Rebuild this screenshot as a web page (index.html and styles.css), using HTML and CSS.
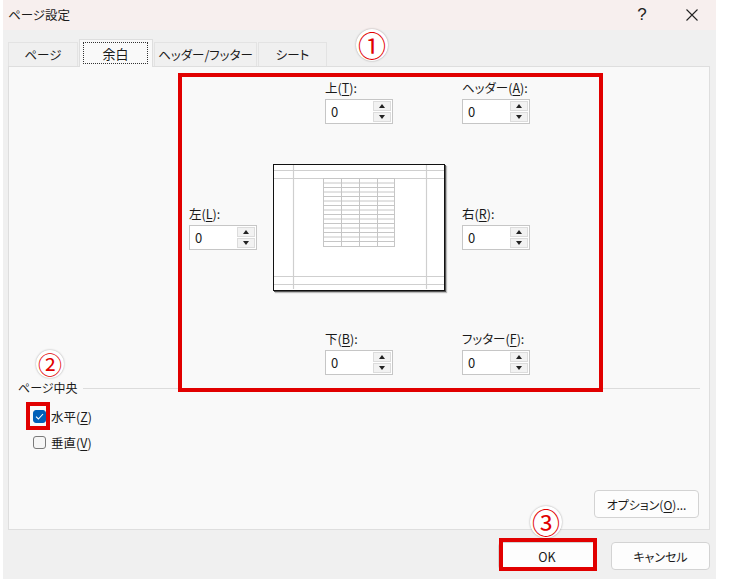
FILE: index.html
```html
<!DOCTYPE html>
<html lang="ja">
<head>
<meta charset="utf-8">
<title>ページ設定</title>
<link rel="stylesheet" href="styles.css">
</head>
<body>
<div class="dialog">
  <div class="titlebar">
    <span class="title">ページ設定</span>
    <div class="tb-btns">
      <span class="help">?</span>
      <span class="close"><svg width="12" height="12" viewBox="0 0 12 12"><path d="M0.5 0.5 L11.5 11.5 M11.5 0.5 L0.5 11.5" stroke="#222" stroke-width="1.1" fill="none"/></svg></span>
    </div>
  </div>
  <div class="body">
    <div class="tabs">
      <div class="tab t1">ページ</div>
      <div class="tab active"><span class="focus">余白</span></div>
      <div class="tab t3">ヘッダー/フッター</div>
      <div class="tab t4">シート</div>
    </div>
    <div class="panel">
      <div class="margins">
        <div class="row row-top">
          <div class="spin-group">
            <div class="lbl">上(<u>T</u>):</div>
            <div class="spin"><span class="val">0</span><span class="arrows"><span class="up"></span><span class="down"></span></span></div>
          </div>
          <div class="spin-group">
            <div class="lbl">ヘッダー(<u>A</u>):</div>
            <div class="spin"><span class="val">0</span><span class="arrows"><span class="up"></span><span class="down"></span></span></div>
          </div>
        </div>
        <div class="row row-mid">
          <div class="spin-group side">
            <div class="lbl">左(<u>L</u>):</div>
            <div class="spin"><span class="val">0</span><span class="arrows"><span class="up"></span><span class="down"></span></span></div>
          </div>
          <div class="preview">
            <svg width="170" height="124" viewBox="0 0 170 124">
              <g stroke="#cfcfcf" stroke-width="1.2" fill="none">
                <line x1="0" y1="5.5" x2="170" y2="5.5"/>
                <line x1="0" y1="13.5" x2="170" y2="13.5"/>
                <line x1="0" y1="111.5" x2="170" y2="111.5"/>
                <line x1="0" y1="119.5" x2="170" y2="119.5"/>
                <line x1="19.5" y1="0" x2="19.5" y2="124"/>
                <line x1="152.5" y1="0" x2="152.5" y2="124"/>
              </g>
              <g stroke="#c6c6c6" stroke-width="1" fill="none">
                <rect x="49.5" y="13.5" width="71" height="68"/>
                <line x1="67.5" y1="13.5" x2="67.5" y2="81.5"/>
                <line x1="85.5" y1="13.5" x2="85.5" y2="81.5"/>
                <line x1="103.5" y1="13.5" x2="103.5" y2="81.5"/>
                <line x1="49.5" y1="18" x2="120.5" y2="18"/>
                <line x1="49.5" y1="22.5" x2="120.5" y2="22.5"/>
                <line x1="49.5" y1="27" x2="120.5" y2="27"/>
                <line x1="49.5" y1="31.5" x2="120.5" y2="31.5"/>
                <line x1="49.5" y1="36" x2="120.5" y2="36"/>
                <line x1="49.5" y1="40.5" x2="120.5" y2="40.5"/>
                <line x1="49.5" y1="45" x2="120.5" y2="45"/>
                <line x1="49.5" y1="49.5" x2="120.5" y2="49.5"/>
                <line x1="49.5" y1="54" x2="120.5" y2="54"/>
                <line x1="49.5" y1="58.5" x2="120.5" y2="58.5"/>
                <line x1="49.5" y1="63" x2="120.5" y2="63"/>
                <line x1="49.5" y1="67.5" x2="120.5" y2="67.5"/>
                <line x1="49.5" y1="72" x2="120.5" y2="72"/>
                <line x1="49.5" y1="76.5" x2="120.5" y2="76.5"/>
              </g>
            </svg>
          </div>
          <div class="spin-group">
            <div class="lbl">右(<u>R</u>):</div>
            <div class="spin"><span class="val">0</span><span class="arrows"><span class="up"></span><span class="down"></span></span></div>
          </div>
        </div>
        <div class="row row-bottom">
          <div class="spin-group">
            <div class="lbl">下(<u>B</u>):</div>
            <div class="spin"><span class="val">0</span><span class="arrows"><span class="up"></span><span class="down"></span></span></div>
          </div>
          <div class="spin-group">
            <div class="lbl">フッター(<u>F</u>):</div>
            <div class="spin"><span class="val">0</span><span class="arrows"><span class="up"></span><span class="down"></span></span></div>
          </div>
        </div>
      </div>
      <div class="center-group">
        <div class="legend"><span>ページ中央</span><span class="rule"></span></div>
        <div class="check first"><span class="box checked"><svg width="9" height="7" viewBox="0 0 9 7"><path d="M1 3.6 L3.4 6 L8 1" stroke="#fff" stroke-width="1.1" fill="none"/></svg></span><span>水平(<u>Z</u>)</span></div>
        <div class="check"><span class="box"></span><span>垂直(<u>V</u>)</span></div>
      </div>
      <div class="options-row"><span class="btn opt">オプション(<u>O</u>)...</span></div>
    </div>
    <div class="footer">
      <span class="btn ok">OK</span>
      <span class="btn cancel">キャンセル</span>
    </div>
  </div>
  <div class="mark mark-margins"></div>
  <div class="mark mark-check"></div>
  <div class="mark mark-ok"></div>
  <span class="callout c1">①</span>
  <span class="callout c2">②</span>
  <span class="callout c3">③</span>
</div>
</body>
</html>
```

FILE: styles.css
```css
* { box-sizing: border-box; }
html, body { margin: 0; padding: 0; background: #ffffff; }
body {
  font-family: "Noto Sans CJK JP", "Noto Sans", sans-serif;
  font-size: 12px;
  color: #1a1a1a;
  font-feature-settings: "palt";
}
u { text-decoration: underline; text-underline-offset: 2px; text-decoration-thickness: 1px; }

.dialog {
  position: relative;
  margin-left: 3px;
  width: 713px;
  height: 579px;
  background: #f0f0f0;
  display: flex;
  flex-direction: column;
}
.titlebar {
  height: 30px;
  flex: none;
  background: #f7efee;
  display: flex;
  align-items: center;
  justify-content: space-between;
  padding-left: 5px;
}
.title { font-size: 12.5px; line-height: 16px; }
.tb-btns { display: flex; align-items: center; height: 30px; }
.help { width: 20px; text-align: center; font-size: 17px; line-height: 20px; margin-right: 34px; font-family: "Liberation Sans", sans-serif; color: #222; }
.close { width: 12px; height: 12px; display: flex; margin-right: 18px; }

.body {
  flex: 1;
  display: flex;
  flex-direction: column;
  padding: 9px 6px 0 5px;
}
.tabs {
  display: flex;
  align-items: flex-end;
  height: 27px;
  flex: none;
  position: relative;
  z-index: 2;
}
.tab {
  height: 24px;
  border: 1px solid #e3e3e3;
  border-bottom: none;
  background: #f0f0f0;
  display: flex;
  align-items: center;
  justify-content: center;
  font-size: 12.5px;
  margin-right: 1px;
}
.t1 { width: 70px; }
.t3 { width: 103px; }
.t4 { width: 69px; }
.tab.active {
  width: 74px;
  height: 28px;
  margin-bottom: -1px;
  background: #f9f9f9;
  border-color: #dedede;
  padding: 2px 4px 3px 3px;
}
.focus {
  width: 100%;
  height: 100%;
  border: 1px dotted #333;
  display: flex;
  align-items: center;
  justify-content: center;
  font-size: 13px;
}

.panel {
  height: 464px;
  flex: none;
  background: #f9f9f9;
  border: 1px solid #dedede;
  display: flex;
  flex-direction: column;
  padding: 13px 0 11px 0;
}
.row { display: flex; }
.row-top, .row-bottom { padding-left: 316px; }
.row-top .spin-group:first-child, .row-bottom .spin-group:first-child { width: 137px; }
.row-mid { padding-left: 180px; align-items: center; margin-top: 40px; }
.row-bottom { margin-top: 40px; }
.spin-group.side { width: 84px; }
.lbl { line-height: 16px; height: 16px; margin-bottom: 3px; font-size: 12.5px; white-space: nowrap; }
.spin {
  width: 68px;
  height: 25px;
  background: #ffffff;
  border: 1px solid #c6c6c6;
  display: flex;
  align-items: stretch;
}
.val { flex: 1; padding-left: 5px; font-size: 13px; line-height: 23px; }
.arrows {
  width: 18px;
  margin: 1px 1px 1px 0;
  display: flex;
  flex-direction: column;
  gap: 1px;
}
.arrows span {
  flex: 1;
  background: #f2f2f2;
  border: 1px solid #dcdcdc;
  display: flex;
  align-items: center;
  justify-content: center;
}
.arrows .up::before {
  content: "";
  border-left: 3px solid transparent;
  border-right: 3px solid transparent;
  border-bottom: 4px solid #222;
}
.arrows .down::before {
  content: "";
  border-left: 3px solid transparent;
  border-right: 3px solid transparent;
  border-top: 4px solid #222;
}
.preview {
  width: 172px;
  height: 127px;
  background: #ffffff;
  border: 1.5px solid #111;
  box-shadow: 1px 1px 0 #555, 2px 2px 1px #bbb;
  margin-right: 17px;
  flex: none;
}
.preview svg { display: block; }

.center-group { padding-left: 9px; padding-right: 9px; }
.legend { display: flex; align-items: center; margin-top: 5px; line-height: 16px; font-size: 12px; }
.legend .rule { flex: 1; height: 1px; background: #dcdcdc; margin-left: 5px; }
.check {
  display: flex;
  align-items: center;
  height: 16px;
  margin-top: 10px;
  padding-left: 15px;
  font-size: 12.5px;
}
.check.first { margin-top: 12px; }
.box {
  width: 13px;
  height: 13px;
  border: 1px solid #7a7a7a;
  border-radius: 3px;
  background: #f6f6f6;
  margin-right: 5px;
  display: flex;
  align-items: center;
  justify-content: center;
}
.box.checked { background: #005fb8; border-color: #005fb8; }
.box svg { display: block; }

.options-row { margin-top: auto; display: flex; justify-content: flex-end; padding-right: 10px; }
.btn {
  height: 28px;
  background: #fdfdfd;
  border: 1px solid #d3d3d3;
  border-radius: 4px;
  display: flex;
  align-items: center;
  justify-content: center;
  font-size: 12px;
}
.opt { width: 105px; }
.footer {
  flex: 1;
  display: flex;
  justify-content: flex-end;
  align-items: flex-start;
  padding-top: 12px;
  padding-right: 0;
  gap: 15px;
}
.ok { width: 98px; font-size: 12.5px; }
.cancel { width: 99px; }

.mark { position: absolute; border: 4px solid #e10000; }
.mark-margins { left: 175px; top: 73px; width: 425px; height: 319px; }
.mark-check { left: 23px; top: 402px; width: 24px; height: 28px; }
.mark-ok { left: 496px; top: 538px; width: 98px; height: 33px; }

.callout {
  position: absolute;
  width: 32px;
  height: 32px;
  border-radius: 50%;
  background: #ffffff;
  box-shadow: 0 0 2px rgba(0,0,0,0.35);
  color: #e10000;
  font-size: 28px;
  line-height: 32px;
  text-align: center;
  font-feature-settings: normal;
}
.c1 { left: 353px; top: 29px; }
.c2 { left: 33px; top: 350px; width: 28px; height: 28px; line-height: 28px; font-size: 24px; }
.c3 { left: 527px; top: 506px; }
```
